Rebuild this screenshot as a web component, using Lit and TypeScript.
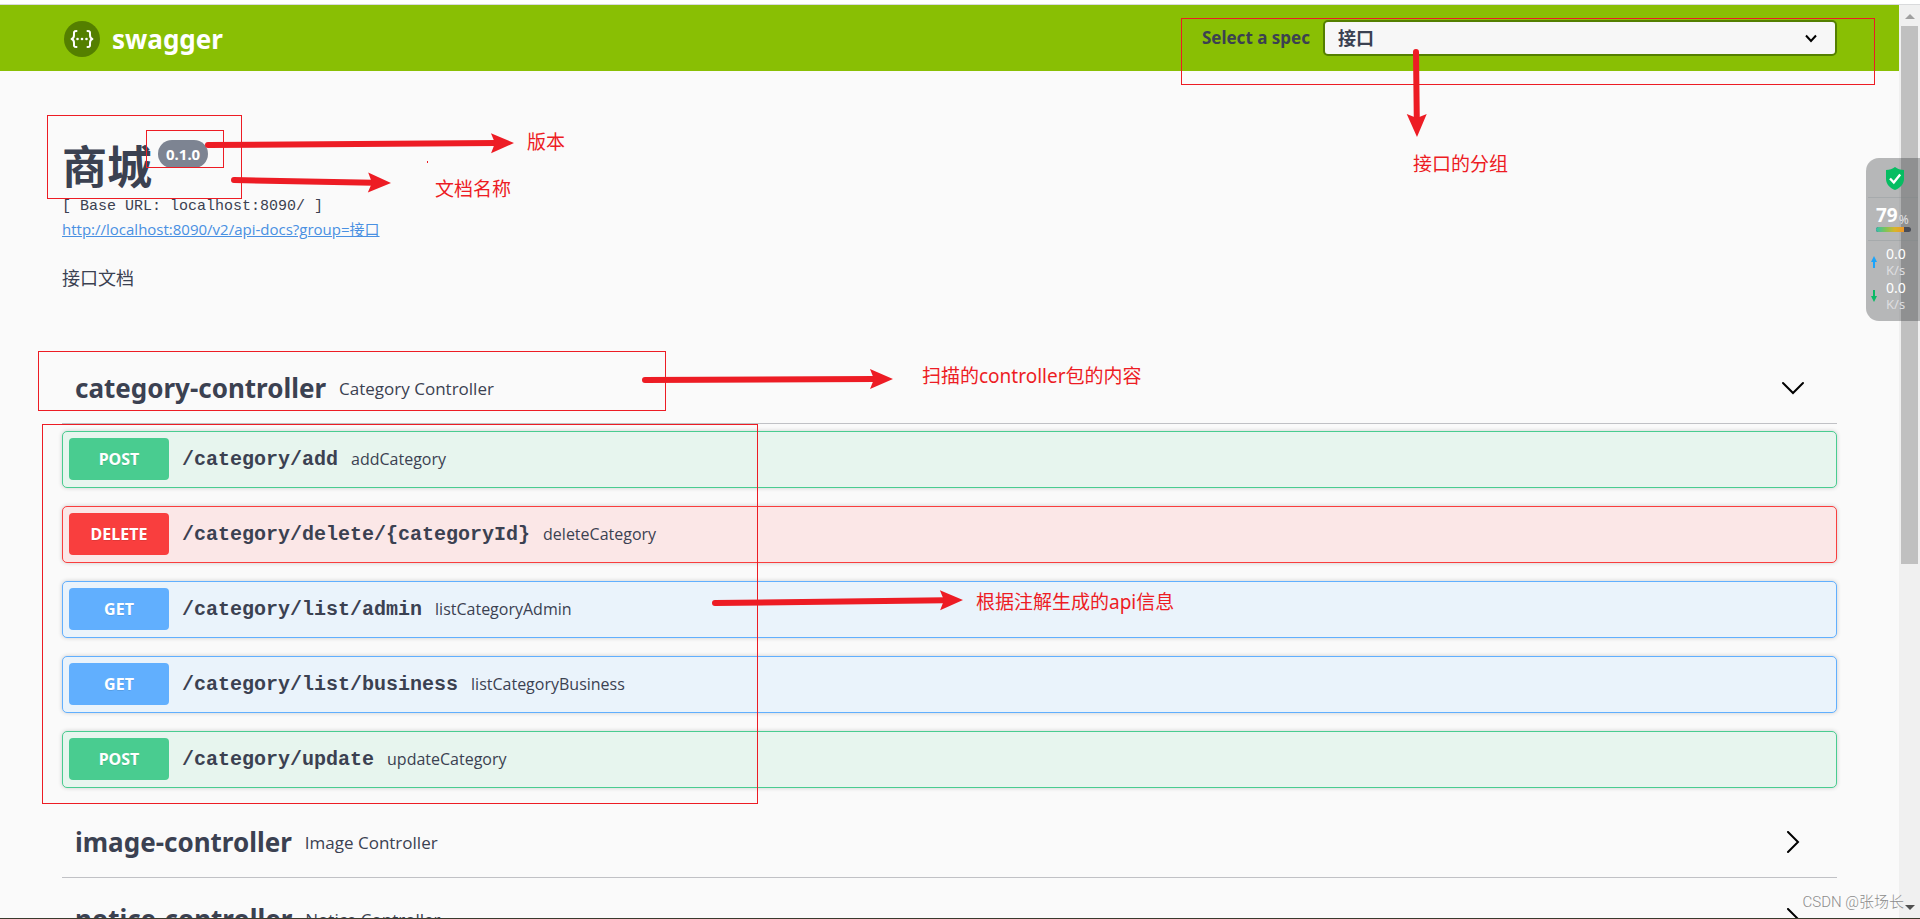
import { LitElement, html, svg, css } from "lit";
import { customElement, property } from "lit/decorators.js";

interface Operation {
  method: "post" | "delete" | "get";
  path: string;
  summary: string;
}

interface Tag {
  name: string;
  description: string;
  open: boolean;
  operations: Operation[];
}

const TAGS: Tag[] = [
  {
    name: "category-controller",
    description: "Category Controller",
    open: true,
    operations: [
      { method: "post", path: "/category/add", summary: "addCategory" },
      { method: "delete", path: "/category/delete/{categoryId}", summary: "deleteCategory" },
      { method: "get", path: "/category/list/admin", summary: "listCategoryAdmin" },
      { method: "get", path: "/category/list/business", summary: "listCategoryBusiness" },
      { method: "post", path: "/category/update", summary: "updateCategory" },
    ],
  },
  { name: "image-controller", description: "Image Controller", open: false, operations: [] },
  { name: "notice-controller", description: "Notice Controller", open: false, operations: [] },
];

@customElement("spec-topbar")
export class SpecTopbar extends LitElement {
  static styles = css`
    :host {
      display: block;
      background: #89bf04;
    }
    .bar {
      display: flex;
      align-items: flex-start;
      justify-content: space-between;
      padding: 15px 62px 14px;
    }
    .brand {
      display: flex;
      align-items: center;
      gap: 12px;
      padding-top: 1px;
      color: #fff;
      font: 700 26px/36px "Noto Sans", sans-serif;
      text-decoration: none;
    }
    .logo {
      display: block;
      width: 38px;
      height: 36px;
    }
    .picker {
      display: flex;
      align-items: center;
      gap: 13px;
    }
    .label {
      font: 700 17px/36px "Noto Sans", sans-serif;
      color: #3b4151;
    }
    .field {
      display: grid;
      align-items: center;
      width: 514px;
    }
    .select {
      grid-area: 1 / 1;
      appearance: none;
      box-sizing: border-box;
      width: 100%;
      height: 36px;
      padding: 0 50px 0 13px;
      border: 2px solid #547f00;
      border-radius: 5px;
      background: #f7f7f7;
      color: #3b4151;
      font: 700 18px/30px "Noto Sans", "Noto Sans CJK SC", sans-serif;
    }
    .caret {
      grid-area: 1 / 1;
      justify-self: end;
      width: 12px;
      height: 9px;
      margin-right: 20px;
      pointer-events: none;
    }
  `;

  render() {
    return html`
      <header class="bar">
        <a class="brand" href="#">
          <svg class="logo" viewBox="0 0 38 36" aria-hidden="true">
            <circle cx="20" cy="18" r="18" fill="#547f00" />
            <g fill="none" stroke="#fff" stroke-width="2" stroke-linecap="round" stroke-linejoin="round">
              <path d="M14.5 10c-3 0-2.500 1.500-2.500 4s-.4 3.500-2.400 4c2 .5 2.400 1.500 2.400 4s-.5 4 2.500 4" />
              <path d="M25.500 10c3 0 2.500 1.500 2.500 4s.4 3.500 2.400 4c-2 .5-2.400 1.500-2.400 4s.5 4-2.500 4" />
            </g>
            <g fill="#fff">
              <circle cx="15.500" cy="18" r="1.300" />
              <circle cx="20" cy="18" r="1.300" />
              <circle cx="24.500" cy="18" r="1.300" />
            </g>
          </svg>
          <span>swagger</span>
        </a>
        <div class="picker">
          <label class="label" for="spec">Select a spec</label>
          <div class="field">
            <select class="select" id="spec">
              <option>接口</option>
            </select>
            <svg class="caret" viewBox="0 0 12 9" aria-hidden="true">
              <path d="M1 1.500l5 5.500 5-5.500" fill="none" stroke="#000" stroke-width="2" />
            </svg>
          </div>
        </div>
      </header>
    `;
  }
}

@customElement("api-info")
export class ApiInfo extends LitElement {
  static styles = css`
    :host {
      display: block;
      padding: 62px 62px 60px;
      color: #3b4151;
    }
    .title {
      display: flex;
      align-items: flex-start;
      gap: 6px;
      margin: 0;
      font: 700 45px/64px "Noto Sans CJK SC", sans-serif;
    }
    .version {
      margin-top: 7px;
      padding: 0 8px;
      border-radius: 14px;
      background: #7d8492;
      color: #fff;
      font: 700 15px/28px "Noto Sans", sans-serif;
    }
    .base {
      margin: 0;
      font: 400 15px/20px "Liberation Mono", monospace;
    }
    .link {
      display: block;
      width: fit-content;
      color: #4990e2;
      font: 400 15px/24px "Open Sans", "Noto Sans CJK SC", sans-serif;
    }
    .text {
      margin: 24px 0 0;
      font: 400 18px/26px "Open Sans", "Noto Sans CJK SC", sans-serif;
    }
  `;

  render() {
    return html`
      <h1 class="title">商城<span class="version">0.1.0</span></h1>
      <p class="base">[ Base URL: localhost:8090/ ]</p>
      <a class="link" href="#">http://localhost:8090/v2/api-docs?group=接口</a>
      <p class="text">接口文档</p>
    `;
  }
}

@customElement("tag-section")
export class TagSection extends LitElement {
  @property({ attribute: false }) tag!: Tag;

  static styles = css`
    :host {
      display: block;
      color: #3b4151;
    }
    .head {
      display: flex;
      align-items: center;
      box-sizing: border-box;
      width: 100%;
      margin: 0 0 4px;
      padding: 12px 25px 9px 13px;
      border: 0;
      border-bottom: 1px solid #c0c1c5;
      background: none;
      color: inherit;
      text-align: left;
      cursor: pointer;
    }
    .name {
      font: 700 26px/51px "Noto Sans", sans-serif;
    }
    .about {
      flex: 1;
      padding: 0 13px;
      font: 400 17px/51px "Open Sans", sans-serif;
    }
    .chevron {
      width: 38px;
      height: 24px;
    }
    .list {
      display: flex;
      flex-direction: column;
      gap: 18px;
      padding: 3px 0 17px;
    }
    .op {
      display: flex;
      align-items: baseline;
      box-sizing: border-box;
      width: 100%;
      padding: 6px;
      border: 1px solid var(--tone);
      border-radius: 5px;
      background: var(--wash);
      box-shadow: 0 0 4px rgba(0, 0, 0, 0.19);
      color: inherit;
      text-align: left;
      cursor: pointer;
    }
    .post {
      --tone: #49cc90;
      --wash: #e7f5ee;
    }
    .delete {
      --tone: #f93e3e;
      --wash: #fbe7e7;
    }
    .get {
      --tone: #61affe;
      --wash: #eaf3fb;
    }
    .method {
      width: 100px;
      border-radius: 4px;
      background: var(--tone);
      color: #fff;
      text-align: center;
      text-shadow: 0 1px 0 rgba(0, 0, 0, 0.1);
      font: 700 16px/42px "Noto Sans", sans-serif;
    }
    .path {
      padding: 0 13px;
      font: 700 20px/42px "Liberation Mono", monospace;
    }
    .summary {
      font: 400 16px/42px "Open Sans", sans-serif;
    }
  `;

  render() {
    const t = this.tag;
    return html`
      <button class="head" aria-expanded=${t.open ? "true" : "false"}>
        <span class="name">${t.name}</span>
        <span class="about">${t.description}</span>
        <svg class="chevron" viewBox="0 0 38 24" fill="none" stroke="#000" stroke-width="2" stroke-linecap="round" aria-hidden="true">
          ${t.open ? svg`<path d="M9 6l10 10 10-10" />` : svg`<path d="M14 1l10 10-10 10" />`}
        </svg>
      </button>
      ${t.open
        ? html`<div class="list">
            ${t.operations.map(
              (o) => html`<button class="op ${o.method}">
                <span class="method">${o.method.toUpperCase()}</span>
                <span class="path">${o.path}</span>
                <span class="summary">${o.summary}</span>
              </button>`
            )}
          </div>`
        : null}
    `;
  }
}

@customElement("page-scrollbar")
export class PageScrollbar extends LitElement {
  static styles = css`
    :host {
      display: flex;
      flex-direction: column;
      align-items: center;
      gap: 7px;
      box-sizing: border-box;
      width: 21px;
      padding: 9px 0 8px;
      background: #f0f0f0;
    }
    .arrow {
      width: 10px;
      height: 5px;
    }
    .thumb {
      width: 17px;
      height: 60%;
      background: #c0c0c0;
    }
    .rest {
      flex: 1;
    }
  `;

  render() {
    return html`
      <svg class="arrow" viewBox="0 0 10 5"><path d="M0 5l5-5 5 5z" fill="#a0a0a0" /></svg>
      <div class="thumb"></div>
      <div class="rest"></div>
      <svg class="arrow" viewBox="0 0 10 5"><path d="M0 0l5 5 5-5z" fill="#505050" /></svg>
    `;
  }
}

@customElement("system-monitor")
export class SystemMonitor extends LitElement {
  static styles = css`
    :host {
      display: block;
      box-sizing: border-box;
      width: 54px;
      padding: 9px 2px 8px;
      border-radius: 13px 0 0 13px;
      background: rgba(40, 42, 48, 0.32);
      color: #fff;
      font-family: "Noto Sans", sans-serif;
    }
    .shield {
      display: block;
      width: 18px;
      height: 23px;
      margin: 0 auto 7px 18px;
    }
    .usage {
      padding: 6px 0 8px 8px;
      border: solid rgba(120, 130, 135, 0.25);
      border-width: 1px 0;
    }
    .figure {
      display: flex;
      align-items: flex-end;
      gap: 1px;
      font: 700 19px/23px "Noto Sans", sans-serif;
    }
    .unit {
      font: 400 12px/15px "Noto Sans", sans-serif;
      color: #e0e0e2;
    }
    .meter {
      width: 35px;
      height: 5px;
      border-radius: 3px;
      overflow: hidden;
      background: #4b4d57;
    }
    .level {
      height: 100%;
      background: linear-gradient(90deg, #35bfae, #7cc45a, #d8b52a, #f0962a);
    }
    .rates {
      display: grid;
      padding-top: 4px;
    }
    .rate {
      display: grid;
      grid-template-columns: 12px auto;
      align-items: center;
      column-gap: 6px;
      font-size: 14px;
      line-height: 17px;
    }
    .mark {
      width: 6px;
      height: 12px;
      justify-self: center;
    }
    .speed {
      display: block;
      color: #dedee0;
      font-size: 13px;
    }
  `;

  render() {
    const usage = 79;
    return html`
      <svg class="shield" viewBox="0 0 18 23" aria-hidden="true">
        <path d="M9 0c2.500 2 5.500 3 9 3v9c0 5-4 9-9 11c-5-2-9-6-9-11V3c3.500 0 6.500-1 9-3z" fill="#06bd62" />
        <path d="M4 11.500l3.800 4 6.400-8" fill="none" stroke="#fff" stroke-width="2.400" />
      </svg>
      <div class="usage">
        <div class="figure">${usage}<span class="unit">%</span></div>
        <div class="meter"><div class="level" style="width:${usage}%"></div></div>
      </div>
      <div class="rates">
        <div class="rate">
          <svg class="mark" viewBox="0 0 6 12"><path d="M3 0l3 6H4v6H2V6H0z" fill="#1ba4fb" /></svg>
          <span>0.0<span class="speed">K/s</span></span>
        </div>
        <div class="rate">
          <svg class="mark" viewBox="0 0 6 12"><path d="M3 12l3-6H4V0H2v6H0z" fill="#0bba66" /></svg>
          <span>0.0<span class="speed">K/s</span></span>
        </div>
      </div>
    `;
  }
}

const FRAMES = [
  [47, 115, 194, 83],
  [146, 130, 77, 37],
  [1181, 18, 693, 66],
  [38, 351, 627, 59],
  [42, 424, 715, 379],
];

const ARROWS = [
  [208, 145, 514, 143],
  [234, 180, 391, 183],
  [1416, 52, 1417, 137],
  [645, 380, 893, 379],
  [715, 603, 963, 600],
];

/* Red frames, arrows and remarks drawn freely over the page. */
@customElement("red-notes")
export class RedNotes extends LitElement {
  static styles = css`
    :host {
      position: absolute;
      inset: 0;
      pointer-events: none;
    }
    .canvas {
      position: absolute;
      inset: 0;
      width: 100%;
      height: 100%;
    }
    .note {
      position: absolute;
      color: #ed1c24;
      white-space: nowrap;
      font: 400 19px/26px "Noto Sans", "Noto Sans CJK SC", sans-serif;
    }
    .n-version { left: 527px; top: 129px; }
    .n-name { left: 435px; top: 176px; }
    .n-group { left: 1413px; top: 151px; }
    .n-package { left: 922px; top: 363px; }
    .n-api { left: 976px; top: 589px; }
  `;

  private arrow([x1, y1, x2, y2]: number[]) {
    const length = Math.hypot(x2 - x1, y2 - y1);
    const angle = (Math.atan2(y2 - y1, x2 - x1) * 180) / Math.PI;
    return svg`<g transform="translate(${x1} ${y1}) rotate(${angle})" fill="#ed1c24">
      <path d="M0 -3H${length - 18}V3H0A3 3 0 0 1 0 -3z" />
      <path d="M${length} 0L${length - 23} -10L${length - 19} 0L${length - 23} 10z" />
    </g>`;
  }

  render() {
    return html`
      <svg class="canvas" aria-hidden="true">
        ${FRAMES.map(
          ([x, y, w, h]) => svg`<rect x=${x + 0.5} y=${y + 0.5} width=${w} height=${h} fill="none" stroke="#ed1c24" />`
        )}
        ${ARROWS.map((a) => this.arrow(a))}
        <rect x="427" y="161" width="1" height="2" fill="#ed1c24" />
      </svg>
      <span class="note n-version">版本</span>
      <span class="note n-name">文档名称</span>
      <span class="note n-group">接口的分组</span>
      <span class="note n-package">扫描的controller包的内容</span>
      <span class="note n-api">根据注解生成的api信息</span>
    `;
  }
}

@customElement("app-root")
export class AppRoot extends LitElement {
  static styles = css`
    :host {
      position: relative;
      display: flex;
      flex-direction: column;
      box-sizing: border-box;
      height: 100vh;
      overflow: hidden;
      padding-top: 4px;
      border-bottom: 1px solid #3a3a2c;
      background: #fff;
    }
    .window {
      display: flex;
      flex: 1;
      min-height: 0;
      border-top: 1px solid #d9dadc;
      background: #fafafa;
    }
    .page {
      flex: 1;
      min-width: 0;
      overflow: hidden;
    }
    .tags {
      padding: 0 62px;
    }
    .monitor {
      position: absolute;
      top: 158px;
      right: 0;
    }
    .watermark {
      position: absolute;
      right: 16px;
      bottom: 4px;
      color: #8c8c8c;
      font: 300 15px/24px Roboto, "Noto Sans CJK SC", sans-serif;
    }
  `;

  render() {
    return html`
      <div class="window">
        <main class="page">
          <spec-topbar></spec-topbar>
          <api-info></api-info>
          <div class="tags">${TAGS.map((t) => html`<tag-section .tag=${t}></tag-section>`)}</div>
        </main>
        <page-scrollbar></page-scrollbar>
      </div>
      <system-monitor class="monitor"></system-monitor>
      <red-notes></red-notes>
      <span class="watermark">CSDN @张场长</span>
    `;
  }
}
